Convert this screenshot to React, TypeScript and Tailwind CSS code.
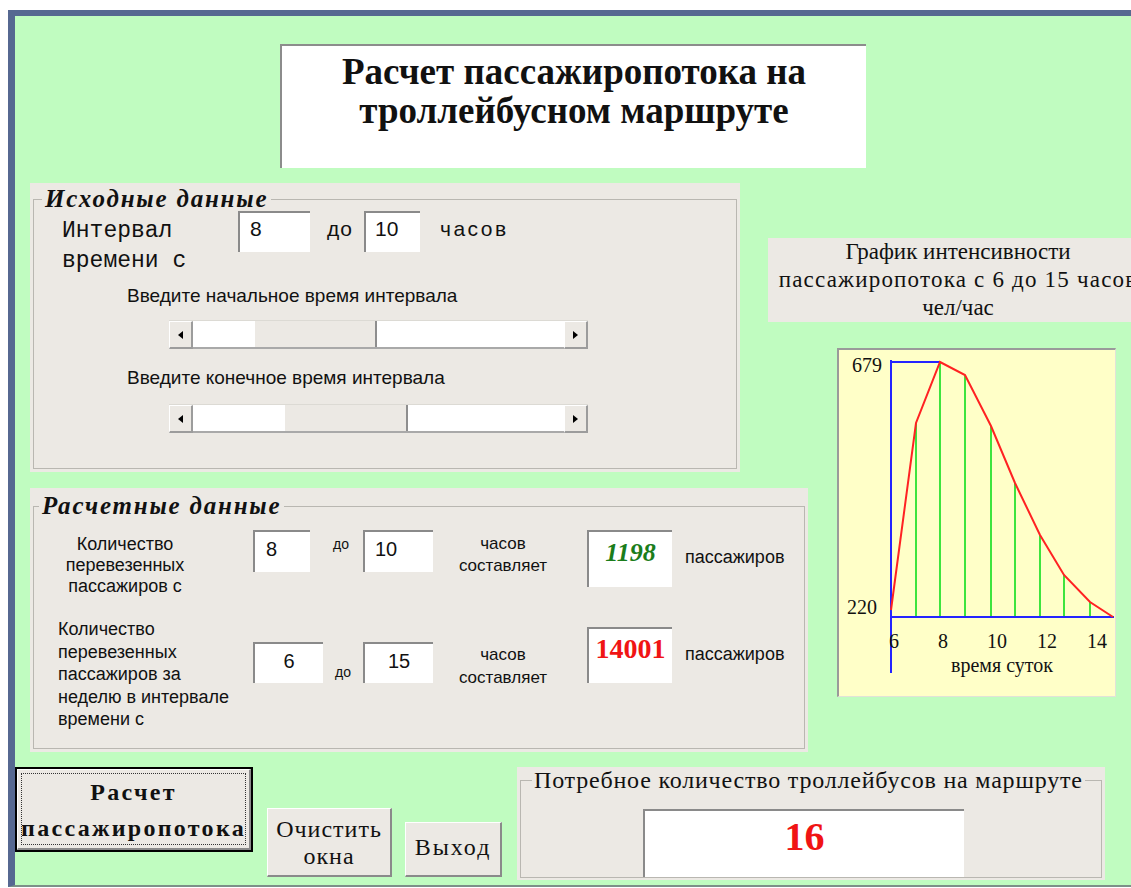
import React from "react";

const serif = "font-['Liberation_Serif','Times_New_Roman',serif]";
const sans = "font-['Liberation_Sans',Arial,sans-serif]";
const mono = "font-['Liberation_Mono','Courier_New',monospace]";

function Sunken({ className, children }: { className?: string; children?: React.ReactNode }) {
  return (
    <div className={`bg-white border-t-2 border-l-2 border-t-[#8a8a8a] border-l-[#8a8a8a] ${className ?? ""}`}>
      {children}
    </div>
  );
}

function Arrow({ dir }: { dir: "left" | "right" }) {
  return (
    <div className="w-[24px] h-full flex items-center justify-center bg-[#ece9e4] border-t border-l border-t-white border-l-white border-r-2 border-b-2 border-r-[#9c9c9c] border-b-[#9c9c9c]">
      <svg width="5" height="8" viewBox="0 0 5 8">
        {dir === "left" ? <path d="M5 0 L0 4 L5 8 Z" fill="#000" /> : <path d="M0 0 L5 4 L0 8 Z" fill="#000" />}
      </svg>
    </div>
  );
}

function ScrollBar({ before, thumb }: { before: number; thumb: number }) {
  return (
    <div className="flex h-[29px] w-[419px] border-t border-t-[#dcdad4]">
      <Arrow dir="left" />
      <div className="flex flex-1 bg-white border-b-2 border-b-[#a9a9a9]">
        <div style={{ width: before }} />
        <div
          style={{ width: thumb }}
          className="bg-[#ece9e4] border-r-2 border-r-[#8e8e8e]"
        />
        <div className="flex-1" />
      </div>
      <Arrow dir="right" />
    </div>
  );
}

function Chart() {
  const pts: [number, number][] = [
    [54, 262],
    [79, 75],
    [103, 14],
    [128, 27],
    [154, 78],
    [178, 135],
    [203, 187],
    [227, 227],
    [253, 254],
    [276, 269],
  ];
  const ticks: [string, number][] = [
    ["6", 52],
    ["8", 101],
    ["10", 150],
    ["12", 200],
    ["14", 250],
  ];
  return (
    <div className="w-[279px] h-[349px] bg-[#ffffc8] border-t-2 border-l-2 border-t-[#9a9a9a] border-l-[#9a9a9a] border-r border-b border-r-[#e2e2d8] border-b-[#e2e2d8]">
      <svg width="276" height="346" viewBox="2 2 276 346" className="block">
        {pts.slice(1, 9).map(([x, y]) => (
          <line key={x} x1={x} y1={y} x2={x} y2={269} stroke="#3ee43e" strokeWidth="2" />
        ))}
        <line x1="54" y1="12" x2="54" y2="325" stroke="#2424ff" strokeWidth="2" />
        <line x1="54" y1="14" x2="103" y2="14" stroke="#2424ff" strokeWidth="2" />
        <line x1="54" y1="269" x2="277" y2="269" stroke="#2424ff" strokeWidth="2" />
        <polyline
          points={pts.map(([x, y]) => `${x},${y}`).join(" ")}
          fill="none"
          stroke="#ff2222"
          strokeWidth="2"
        />
        <g fontFamily="Liberation Serif, Times New Roman, serif" fontSize="20" fill="#111">
          <text x="15" y="24">679</text>
          <text x="10" y="266">220</text>
          {ticks.map(([t, x]) => (
            <text key={t} x={x} y="300">
              {t}
            </text>
          ))}
          <text x="165" y="324" textAnchor="middle">
            время суток
          </text>
        </g>
      </svg>
    </div>
  );
}

export default function App() {
  return (
    <div className="w-[1131px] h-[888px] bg-white overflow-hidden text-[#111]">
      <div className="ml-[8px] mt-[10px] h-[877px] border-t-[6px] border-l-[7px] border-b-2 border-t-[#566891] border-l-[#566891] border-b-[#7d9088] bg-[#c0fcc0]">
        {/* Title */}
        <div
          className={`ml-[265px] mt-[28px] w-[586px] h-[124px] bg-white border-t-2 border-l-2 border-t-[#8c8c8c] border-l-[#8c8c8c] pt-[6px] text-center font-bold text-[37px] leading-[39px] ${serif}`}
        >
          Расчет пассажиропотока на
          <br />
          троллейбусном маршруте
        </div>

        {/* Main area */}
        <div className="ml-[15px] mt-[15px] grid grid-cols-[710px_28px_40px_29px_279px_1fr] grid-rows-[55px_84px_26px_124px_16px_209px_55px]">
          {/* Исходные данные */}
          <div className="col-start-1 row-start-1 row-span-4 bg-[#ece9e4] pt-[5px] px-[3px] pb-[3px] flex flex-col">
            <fieldset className="flex-1 border border-[#b9b7b1] min-w-0">
              <legend className={`ml-[8px] px-[3px] text-[25px] leading-[22px] tracking-[1.8px] font-bold italic ${serif}`}>
                Исходные данные
              </legend>
              <div className="flex items-start mt-[1px]">
                <div className={`ml-[28px] w-[176px] mt-[5px] text-[23px] leading-[30px] ${mono}`}>
                  Интервал
                  <br />
                  времени с
                </div>
                <Sunken className={`w-[72px] h-[41px] pl-[10px] pt-[4px] text-[21px] leading-[24px] ${sans}`}>8</Sunken>
                <div className={`w-[54px] pl-[17px] mt-[6px] text-[21px] leading-[24px] tracking-[1px] ${sans}`}>до</div>
                <Sunken className={`w-[56px] h-[41px] pl-[9px] pt-[4px] text-[21px] leading-[24px] ${sans}`}>10</Sunken>
                <div className={`ml-[20px] mt-[6px] text-[21px] leading-[24px] tracking-[2.5px] ${sans}`}>часов</div>
              </div>
              <div className={`ml-[93px] mt-[9px] text-[19px] leading-[22px] ${sans}`}>
                Введите начальное время интервала
              </div>
              <div className="ml-[135px] mt-[13px]">
                <ScrollBar before={62} thumb={122} />
              </div>
              <div className={`ml-[93px] mt-[18px] text-[19px] leading-[22px] ${sans}`}>
                Введите конечное время интервала
              </div>
              <div className="ml-[135px] mt-[15px]">
                <ScrollBar before={92} thumb={123} />
              </div>
            </fieldset>
          </div>

          {/* Chart caption */}
          <div
            className={`col-start-3 col-span-4 row-start-2 w-[380px] h-[84px] bg-[#ece9e4] text-center text-[23px] leading-[28px] whitespace-nowrap ${serif}`}
          >
            График интенсивности
            <br />
            <span className="tracking-[1.2px]">пассажиропотока с 6 до 15 часов</span>
            <br />
            чел/час
          </div>

          {/* Chart */}
          <div className="col-start-5 row-start-4 row-span-3">
            <Chart />
          </div>

          {/* Расчетные данные */}
          <div className="col-start-1 col-span-3 row-start-6 row-span-2 bg-[#ece9e4] pt-[7px] px-[3px] pb-[3px] flex flex-col">
            <fieldset className={`flex-1 border border-[#b9b7b1] min-w-0 ${sans}`}>
              <legend className={`ml-[5px] px-[3px] text-[25px] leading-[22px] tracking-[1.8px] font-bold italic ${serif}`}>
                Расчетные данные
              </legend>

              <div className="flex items-start mt-[13px]">
                <div className="ml-[21px] w-[140px] mt-[4px] text-center text-[18px] leading-[21px]">
                  Количество
                  <br />
                  перевезенных
                  <br />
                  пассажиров с
                </div>
                <Sunken className="ml-[58px] w-[57px] h-[42px] pl-[11px] pt-[6px] text-[20px] leading-[23px]">8</Sunken>
                <div className="w-[53px] pl-[23px] mt-[6px] text-[14px] leading-[16px]">до</div>
                <Sunken className="w-[70px] h-[42px] pl-[10px] pt-[6px] text-[20px] leading-[23px]">10</Sunken>
                <div className="ml-[10px] w-[120px] mt-[3px] text-center text-[17px] leading-[22px]">
                  часов
                  <br />
                  составляет
                </div>
                <Sunken
                  className={`ml-[24px] w-[85px] h-[57px] pt-[6px] text-center text-[26px] leading-[30px] font-bold italic text-[#1b7d1b] ${serif}`}
                >
                  1198
                </Sunken>
                <div className="ml-[13px] mt-[16px] text-[18px] leading-[22px]">пассажиров</div>
              </div>

              <div className="flex items-start mt-[21px]">
                <div className="ml-[24px] w-[185px] text-[18px] leading-[22.5px]">
                  Количество
                  <br />
                  перевезенных
                  <br />
                  пассажиров за
                  <br />
                  неделю в интервале
                  <br />
                  времени с
                </div>
                <Sunken className="ml-[10px] mt-[24px] w-[70px] h-[41px] pt-[6px] text-center text-[20px] leading-[23px]">
                  6
                </Sunken>
                <div className="w-[40px] pl-[12px] mt-[46px] text-[14px] leading-[16px]">до</div>
                <Sunken className="mt-[24px] w-[70px] h-[41px] pt-[6px] text-center text-[20px] leading-[23px]">
                  15
                </Sunken>
                <div className="ml-[10px] w-[120px] mt-[25px] text-center text-[17px] leading-[23px]">
                  часов
                  <br />
                  составляет
                </div>
                <Sunken
                  className={`ml-[24px] mt-[9px] w-[85px] h-[56px] pt-[4px] text-center text-[28px] leading-[32px] font-bold text-[#f01414] ${serif}`}
                >
                  14001
                </Sunken>
                <div className="ml-[13px] mt-[25px] text-[18px] leading-[22px]">пассажиров</div>
              </div>
            </fieldset>
          </div>
        </div>

        {/* Buttons and result */}
        <div className={`mt-[15px] flex items-start ${serif}`}>
          <div className="w-[238px] h-[85px] border-2 border-black bg-[#ece9e4]">
            <div className="h-full border-t border-l border-t-white border-l-white border-r-2 border-b-2 border-r-[#8a8a8a] border-b-[#8a8a8a] p-[3px]">
              <div className="h-full border border-dotted border-[#333] flex flex-col items-center overflow-hidden text-[24px] font-bold tracking-[2.3px]">
                <span className="block leading-[26px] mt-[5px]">Расчет</span>
                <span className="block leading-[26px] mt-[10px] whitespace-nowrap">пассажиропотока</span>
              </div>
            </div>
          </div>

          <div className="ml-[14px] mt-[41px] w-[125px] h-[69px] bg-[#ece9e4] border-t border-l border-t-white border-l-white border-r-2 border-b-2 border-r-[#8a8a8a] border-b-[#8a8a8a] pt-[7px] text-center text-[24px] leading-[27px] tracking-[1px]">
            Очистить
            <br />
            окна
          </div>

          <div className="ml-[13px] mt-[55px] w-[97px] h-[55px] bg-[#ece9e4] border-t border-l border-t-white border-l-white border-r-2 border-b-2 border-r-[#8a8a8a] border-b-[#8a8a8a] pt-[11px] text-center text-[24px] leading-[27px] tracking-[2px]">
            Выход
          </div>

          <div className="ml-[15px] w-[588px] h-[113px] bg-[#ece9e4] pt-[1px] px-[3px] pb-[3px] flex flex-col">
            <fieldset className="flex-1 border border-[#b9b7b1] min-w-0">
              <legend className="ml-[11px] px-[2px] text-[24px] leading-[24px] tracking-[0.8px] whitespace-nowrap">
                Потребное количество троллейбусов на маршруте
              </legend>
              <Sunken className="ml-[122px] mt-[17px] w-[321px] h-[68px] pt-[4px] text-center text-[40px] leading-[44px] font-bold text-[#f01414]">
                16
              </Sunken>
            </fieldset>
          </div>
        </div>
      </div>
    </div>
  );
}
